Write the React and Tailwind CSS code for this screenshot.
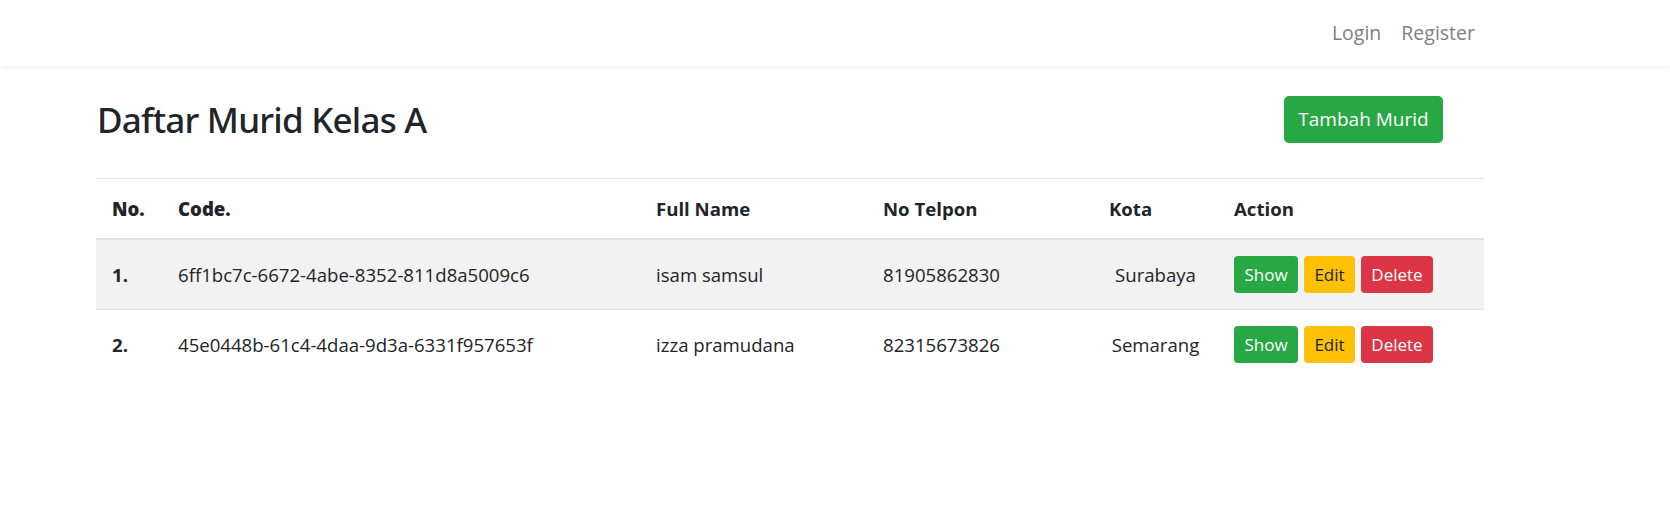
import React from "react";

const murid = [
  {
    no: "1.",
    code: "6ff1bc7c-6672-4abe-8352-811d8a5009c6",
    nama: "isam samsul",
    telpon: "81905862830",
    kota: "Surabaya",
  },
  {
    no: "2.",
    code: "45e0448b-61c4-4daa-9d3a-6331f957653f",
    nama: "izza pramudana",
    telpon: "82315673826",
    kota: "Semarang",
  },
];

export default function App() {
  return (
    <div className="min-h-screen bg-white text-[#212529] font-['Open_Sans',sans-serif]">
      {/* Navbar */}
      <nav className="h-[66px] flex items-center justify-end bg-white shadow-[0_2px_4px_rgba(0,0,0,0.05)] pr-[187px]">
        <a href="#" className="text-[19.5px] text-[#808080] px-2">
          Login
        </a>
        <a href="#" className="text-[19.5px] text-[#808080] px-2 ml-[4px]">
          Register
        </a>
      </nav>

      <div className="pl-[96px] pt-[29px]">
        <div className="w-[1388px] flex items-center justify-between h-[48px]">
          <h2 className="font-['Noto_Sans',sans-serif] text-[35px] font-medium leading-none pl-px tracking-[-0.8px]">
            Daftar Murid Kelas A
          </h2>
          <button className="mr-[41px] h-[47px] w-[159px] rounded-[5px] bg-[#28a745] text-white text-[19px]">
            Tambah Murid
          </button>
        </div>

        <table className="mt-[35px] w-[1388px] border-collapse text-[18.6px] text-left">
          <thead>
            <tr className="border-t border-b-2 border-[#dee2e6]">
              <th className="w-[66px] px-4 py-4 leading-[27px] font-black">No.</th>
              <th className="w-[478px] px-4 py-4 leading-[27px] font-black">Code.</th>
              <th className="w-[227px] px-4 py-4 leading-[27px] font-bold">Full Name</th>
              <th className="w-[226px] px-4 py-4 leading-[27px] font-bold">No Telpon</th>
              <th className="w-[125px] px-4 py-4 leading-[27px] font-bold">Kota</th>
              <th className="px-4 py-4 leading-[27px] font-bold">Action</th>
            </tr>
          </thead>
          <tbody>
            {murid.map((m, i) => (
              <tr
                key={m.code}
                className={`border-t border-[#dee2e6] ${i % 2 === 0 ? "bg-[#f2f2f2]" : "bg-white"}`}
              >
                <td className="px-4 py-4 font-bold">{m.no}</td>
                <td className="px-4 py-4">{m.code}</td>
                <td className="px-4 py-4">{m.nama}</td>
                <td className="px-4 py-4">{m.telpon}</td>
                <td className="px-4 py-4 text-center">{m.kota}</td>
                <td className="px-4 py-4">
                  <div className="flex gap-[6px]">
                    <button className="h-[37px] w-[64px] rounded bg-[#28a745] text-white text-[17px]">
                      Show
                    </button>
                    <button className="h-[37px] w-[51px] rounded bg-[#ffc107] text-[#212529] text-[17px]">
                      Edit
                    </button>
                    <button className="h-[37px] w-[72px] rounded bg-[#dc3545] text-white text-[17px]">
                      Delete
                    </button>
                  </div>
                </td>
              </tr>
            ))}
          </tbody>
        </table>
      </div>
    </div>
  );
}
